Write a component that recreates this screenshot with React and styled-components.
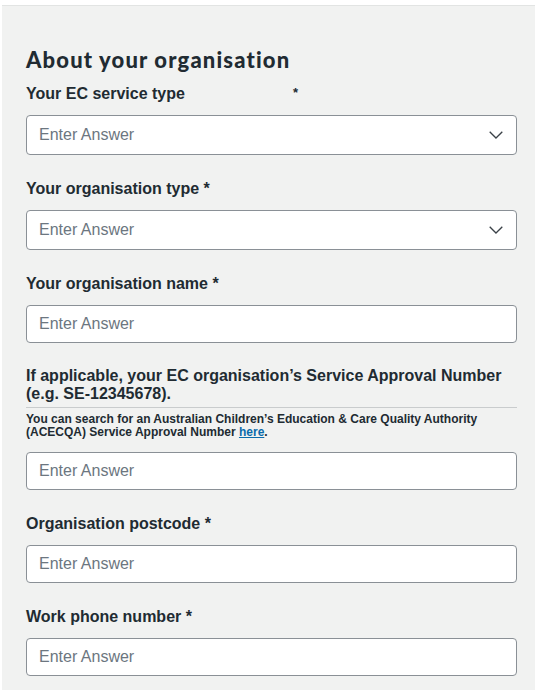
import React from "react";
import styled, { createGlobalStyle } from "styled-components";

const GlobalStyle = createGlobalStyle`
  html, body {
    margin: 0;
    padding: 0;
    background: #ffffff;
  }
  body {
    font-family: "Liberation Sans", Arial, sans-serif;
    color: #212b32;
  }
`;

const Page = styled.div`
  padding: 5px 2px 0 2px;
  background: #ffffff;
`;

const Panel = styled.section`
  box-sizing: border-box;
  background: #f1f2f1;
  border-top: 1px solid #e2e4e3;
  padding: 41px 18px 10px 24px;
  min-height: 685px;
`;

const Heading = styled.h2`
  margin: 0 0 10px;
  font-family: Lato, "Noto Sans", sans-serif;
  font-weight: 900;
  font-size: 22px;
  line-height: 26px;
  letter-spacing: 1.15px;
  color: #212b32;
`;

const Field = styled.div`
  margin-bottom: 24px;
`;

const Label = styled.label`
  display: block;
  font-size: 16px;
  font-weight: bold;
  line-height: ${({ $tight }) => ($tight ? "18px" : "19px")};
  margin-bottom: ${({ $tight }) => ($tight ? "4px" : "12px")};
  color: #212b32;
`;

const Star = styled.span`
  margin-left: ${({ $far }) => ($far ? "108px" : "0")};
  font-size: 13px;
  vertical-align: 2px;
`;

const Divider = styled.hr`
  margin: 0 0 5px;
  border: 0;
  border-top: 1px solid #c9cccd;
`;

const Hint = styled.p`
  margin: 0 0 13px;
  font-size: 12px;
  font-weight: bold;
  line-height: 13px;
  color: #212b32;

  a {
    color: #0a6bab;
    text-decoration: underline;
  }
`;

const InputWrap = styled.div`
  display: flex;
  align-items: center;
  height: ${({ $select }) => ($select ? "40px" : "38px")};
  box-sizing: border-box;
  background: #ffffff;
  border: 1px solid #8a9096;
  border-radius: 4px;
`;

const Input = styled.input`
  flex: 1;
  min-width: 0;
  border: 0;
  outline: none;
  background: transparent;
  padding: 0 12px;
  height: 100%;
  font-family: "Liberation Sans", Arial, sans-serif;
  font-size: 16px;
  color: #212b32;

  &::placeholder {
    color: #6c7680;
  }
`;

const Chevron = styled.svg`
  width: 14px;
  height: 8px;
  margin-right: 13px;
  flex-shrink: 0;
`;

const Select = () => (
  <InputWrap $select>
    <Input placeholder="Enter Answer" readOnly />
    <Chevron viewBox="0 0 14 8" fill="none">
      <path d="M0.7 0.7 L7 7 L13.3 0.7" stroke="#3a4147" strokeWidth="1.3" />
    </Chevron>
  </InputWrap>
);

const TextBox = () => (
  <InputWrap>
    <Input placeholder="Enter Answer" />
  </InputWrap>
);

export default function App() {
  return (
    <Page>
      <GlobalStyle />
      <Panel>
        <Heading>About your organisation</Heading>

        <Field>
          <Label>
            Your EC service type<Star $far>*</Star>
          </Label>
          <Select />
        </Field>

        <Field>
          <Label>Your organisation type *</Label>
          <Select />
        </Field>

        <Field>
          <Label>Your organisation name *</Label>
          <TextBox />
        </Field>

        <Field>
          <Label $tight>
            If applicable, your EC organisation’s Service Approval Number
            (e.g. SE-12345678).
          </Label>
          <Divider />
          <Hint>
            You can search for an Australian Children’s Education &amp; Care
            Quality Authority (ACECQA) Service Approval Number{" "}
            <a href="#">here</a>.
          </Hint>
          <TextBox />
        </Field>

        <Field>
          <Label>Organisation postcode *</Label>
          <TextBox />
        </Field>

        <Field>
          <Label>Work phone number *</Label>
          <TextBox />
        </Field>
      </Panel>
    </Page>
  );
}
